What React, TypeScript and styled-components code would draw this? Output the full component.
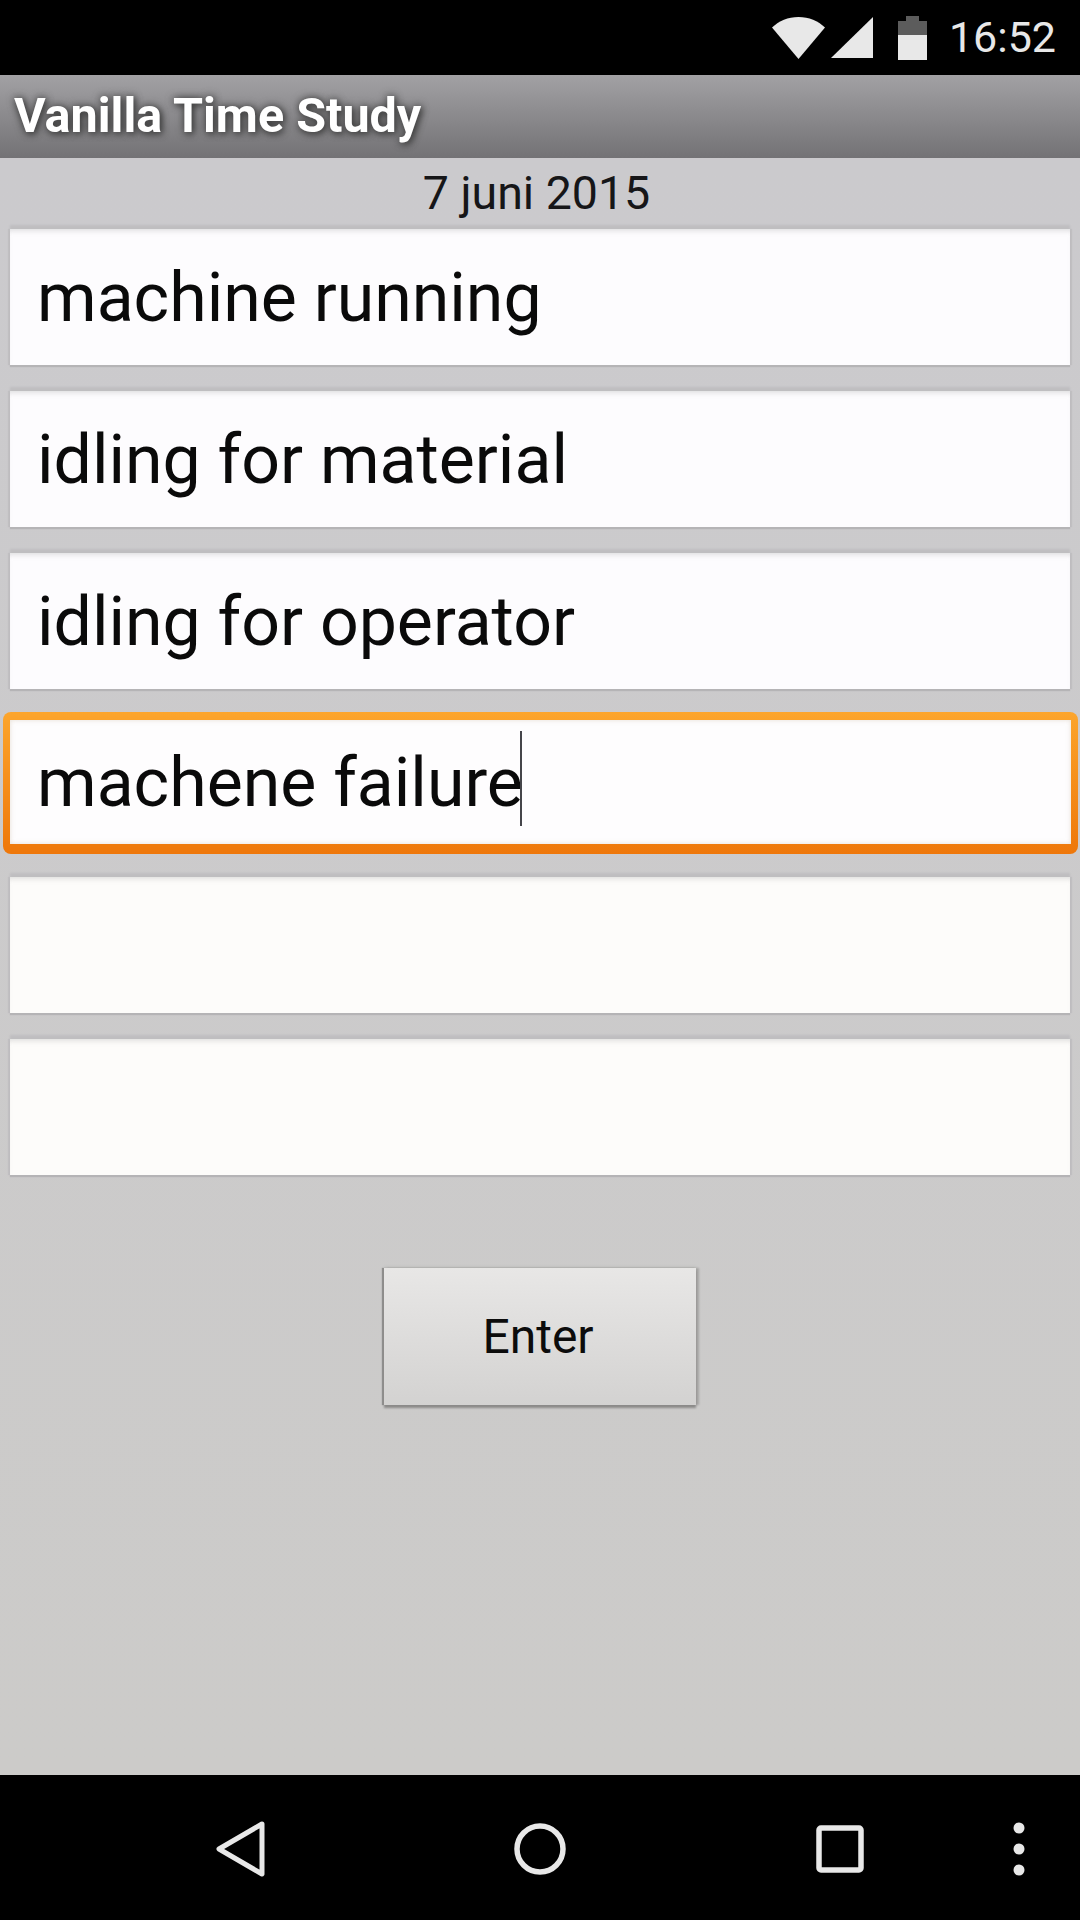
import React from "react";
import styled, { createGlobalStyle } from "styled-components";

const Global = createGlobalStyle`
  html, body { margin: 0; padding: 0; background: #000; }
  #root { width: 1080px; height: 1920px; }
`;

const Screen = styled.div`
  width: 1080px;
  height: 1920px;
  display: flex;
  flex-direction: column;
  overflow: hidden;
  font-family: Roboto, "Liberation Sans", sans-serif;
  background: #000;
`;

const StatusBar = styled.header`
  height: 75px;
  flex: none;
  background: #000;
  display: flex;
  align-items: center;
  justify-content: flex-end;
  padding-right: 24px;
  box-sizing: border-box;
`;

const StatusIcon = styled.svg<{ $gap: number }>`
  display: block;
  margin-right: ${(p) => p.$gap}px;
  flex: none;
`;

const Clock = styled.span`
  color: #e8e8e8;
  font-size: 43px;
  line-height: 75px;
`;

const TitleBar = styled.div`
  height: 83px;
  flex: none;
  box-sizing: border-box;
  padding: 0 0 2px 14px;
  display: flex;
  align-items: center;
  background: linear-gradient(#a2a1a4, #737275);
`;

const Title = styled.h1`
  margin: 0;
  color: #fff;
  font-size: 48.500px;
  font-weight: 700;
  text-shadow: 2px 2px 7px #3c3c3c, 0 0 9px #4a4a4a;
`;

const Content = styled.main`
  flex: 1;
  display: flex;
  flex-direction: column;
  align-items: stretch;
  background: linear-gradient(#cbcacd, #cccbc9);
`;

const DateLabel = styled.div`
  height: 71px;
  flex: none;
  box-sizing: border-box;
  padding-right: 7px;
  color: #161618;
  font-size: 46.500px;
  line-height: 70px;
  text-align: center;
`;

const Fields = styled.div`
  display: flex;
  flex-direction: column;
  gap: 26px;
`;

const Field = styled.div<{ $focused?: boolean; $empty?: boolean }>`
  height: ${(p) => (p.$focused ? 142 : 136)}px;
  margin: ${(p) => (p.$focused ? "-3px 2px -3px 3px" : "0 10px")};
  box-sizing: border-box;
  display: flex;
  align-items: center;
  padding: 2px 0 0 27px;
  color: #0a0a0a;
  font-size: 68px;
  ${(p) =>
    p.$focused
      ? `
    border: solid transparent;
    border-width: 8px 7px 10px;
    border-radius: 8px;
    background: linear-gradient(#fefdfe, #fefdfe) padding-box,
      linear-gradient(#fca52c, #ee770a) border-box;
    box-shadow: inset 0 0 5px rgba(190, 170, 140, 0.35);
  `
      : `
    background: ${p.$empty ? "#fdfcfa" : "#fdfcfe"};
    box-shadow: 0 -4px 2px #bfbec0, 0 2px 1px #b5b4b6, -2px 0 1px #c0bfc1, 2px 0 1px #c0bfc1,
      inset 0 5px 5px -3px rgba(170, 170, 170, 0.35);
  `}
`;

const Typed = styled.span`
  display: flex;
  align-items: center;
  position: relative;
  white-space: pre;
`;

const Caret = styled.i`
  position: absolute;
  right: 1px;
  top: -12px;
  width: 2px;
  height: 95px;
  background: #45454a;
`;

const EnterButton = styled.button`
  align-self: center;
  margin-top: 93px;
  width: 312px;
  height: 137px;
  box-sizing: border-box;
  border: 0;
  padding: 0 4px 0 0;
  color: #0c0c0c;
  font: 400 48px Roboto, "Liberation Sans", sans-serif;
  background: linear-gradient(#e8e7e6, #d3d2d1);
  box-shadow: 0 3px 2px #8b8a89, 3px 0 2px #a5a4a3, -2px 0 1px #8f8e8d, 0 -2px 2px #c4c3c2;
`;

const NavBar = styled.nav`
  height: 145px;
  flex: none;
  background: #000;
  display: grid;
  grid-template-columns: 216px 49px 249px 52px 250px 48px 150px 10px;
  align-items: center;
  padding-top: 2px;
  box-sizing: border-box;
`;

const NavIcon = styled.svg<{ $col: number }>`
  grid-column: ${(p) => p.$col};
  display: block;
  justify-self: center;
`;

export default function App() {
  return (
    <Screen>
      <Global />
      <StatusBar>
        <StatusIcon $gap={6} width="53" height="42" viewBox="0 0 53 42">
          <path d="M0 10.5C7 4 16 0 26.500 0S46 4 53 10.500L26.500 42Z" fill="#e8e8e8" />
        </StatusIcon>
        <StatusIcon $gap={25} width="42" height="41" viewBox="0 0 42 41">
          <path d="M0 41L42 0V41Z" fill="#e8e8e8" />
        </StatusIcon>
        <StatusIcon $gap={22} width="29" height="44" viewBox="0 0 29 44">
          <path d="M0 5H8V0H21V5H29V19H0Z" fill="#5c5c5c" />
          <path d="M0 19H29V44H0Z" fill="#e8e8e8" />
        </StatusIcon>
        <Clock>16:52</Clock>
      </StatusBar>
      <TitleBar>
        <Title>Vanilla Time Study</Title>
      </TitleBar>
      <Content>
        <DateLabel>7 juni 2015</DateLabel>
        <Fields>
          <Field>machine running</Field>
          <Field>idling for material</Field>
          <Field>idling for operator</Field>
          <Field $focused>
            <Typed>
              machene failure
              <Caret />
            </Typed>
          </Field>
          <Field $empty />
          <Field $empty />
        </Fields>
        <EnterButton>Enter</EnterButton>
      </Content>
      <NavBar>
        <NavIcon $col={2} width="49" height="56" viewBox="0 0 49 56">
          <path d="M46 3L3 28L46 53Z" fill="none" stroke="#e8e8e8" strokeWidth="5" strokeLinejoin="round" />
        </NavIcon>
        <NavIcon $col={4} width="52" height="52" viewBox="0 0 52 52">
          <circle cx="26" cy="26" r="23" fill="none" stroke="#e8e8e8" strokeWidth="5.500" />
        </NavIcon>
        <NavIcon $col={6} width="48" height="48" viewBox="0 0 48 48">
          <rect x="3" y="3" width="42" height="42" rx="2" fill="none" stroke="#e8e8e8" strokeWidth="5.500" />
        </NavIcon>
        <NavIcon $col={8} width="12" height="54" viewBox="0 0 12 54">
          <circle cx="6" cy="6" r="5.500" fill="#e8e8e8" />
          <circle cx="6" cy="27" r="5.500" fill="#e8e8e8" />
          <circle cx="6" cy="48" r="5.500" fill="#e8e8e8" />
        </NavIcon>
      </NavBar>
    </Screen>
  );
}
